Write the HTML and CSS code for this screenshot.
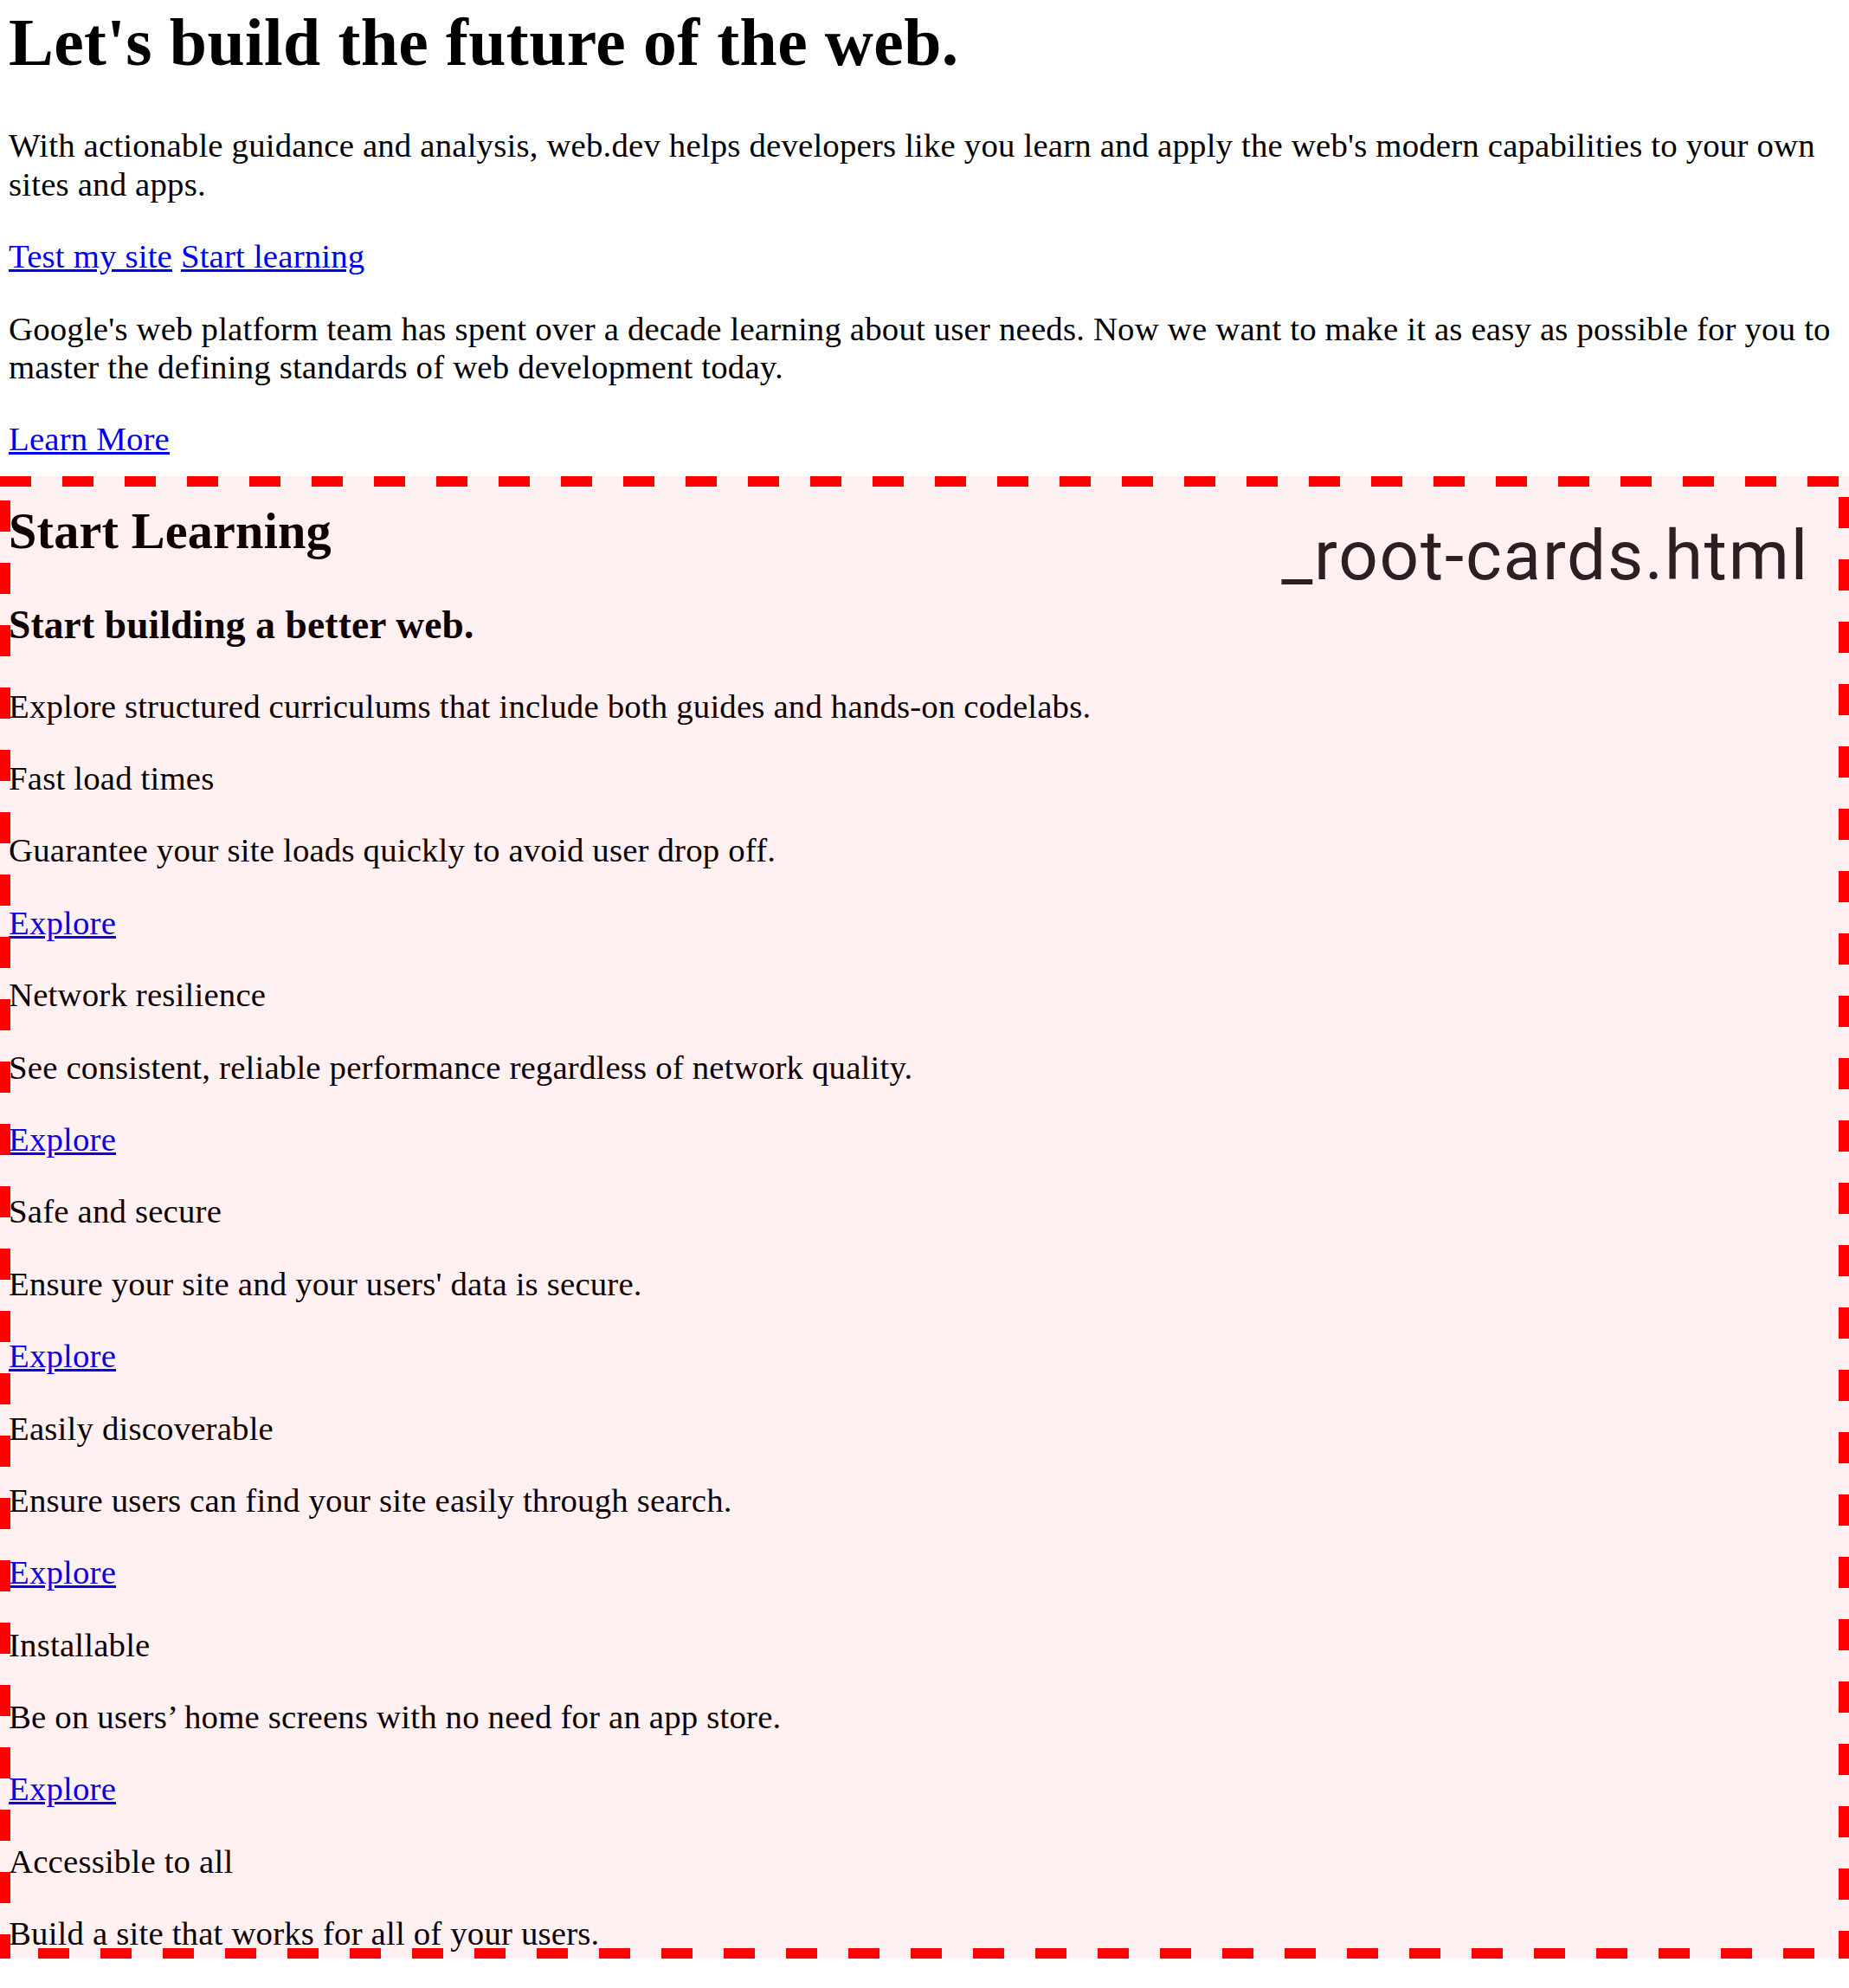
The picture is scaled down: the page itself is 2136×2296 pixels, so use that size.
FILE: index.html
```html
<!DOCTYPE html>
<html>
<head>
<meta charset="utf-8">
<title>web.dev</title>
<link rel="stylesheet" href="styles.css">
</head>
<body>
<div class="page">
  <h1 class="title">Let's build the future of the web.</h1>
  <p>With actionable guidance and analysis, web.dev helps developers like you learn and apply the web's modern capabilities to your own sites and apps.</p>
  <p><a href="#">Test my site</a> <a href="#">Start learning</a></p>
  <p>Google's web platform team has spent over a decade learning about user needs. Now we want to make it as easy as possible for you to master the defining standards of web development today.</p>
  <p><a href="#">Learn More</a></p>

  <section class="region">
    <h2 class="region-title">Start Learning</h2>
    <h3 class="region-sub">Start building a better web.</h3>
    <p>Explore structured curriculums that include both guides and hands-on codelabs.</p>
    <p>Fast load times</p>
    <p>Guarantee your site loads quickly to avoid user drop off.</p>
    <p><a href="#">Explore</a></p>
    <p>Network resilience</p>
    <p>See consistent, reliable performance regardless of network quality.</p>
    <p><a href="#">Explore</a></p>
    <p>Safe and secure</p>
    <p>Ensure your site and your users' data is secure.</p>
    <p><a href="#">Explore</a></p>
    <p>Easily discoverable</p>
    <p>Ensure users can find your site easily through search.</p>
    <p><a href="#">Explore</a></p>
    <p>Installable</p>
    <p>Be on users’ home screens with no need for an app store.</p>
    <p><a href="#">Explore</a></p>
    <p>Accessible to all</p>
    <p>Build a site that works for all of your users.</p>
    <div class="region-label">_root-cards.html</div>
  </section>
</div>
</body>
</html>
```

FILE: styles.css
```css
html, body {
  margin: 0;
  background: #ffffff;
}

body {
  font-family: "Liberation Serif", "Times New Roman", serif;
  font-size: 38.85px;
  line-height: 1.147;
  letter-spacing: 0.16px;
  color: #000000;
}

.page {
  padding: 5px 10px 0;
}

a {
  color: #0000ee;
}

p {
  margin: 1em 0;
}

.title {
  font-size: 2em;
  letter-spacing: 0.4px;
  margin: 0 0 0.67em;
}

.region {
  position: relative;
  margin: -19px -10px 0;
  padding: 31px 10px 0;
  height: 1681px;
  overflow: hidden;
}

.region::after {
  content: "";
  position: absolute;
  inset: 0;
  pointer-events: none;
  background:
    repeating-linear-gradient(to right, #ff0000 0 36px, transparent 36px 72px) left 0 top 0 / 100% 12px no-repeat,
    repeating-linear-gradient(to bottom, #ff0000 0 36px, transparent 36px 72px) left 0 top 28px / 12px calc(100% - 28px) no-repeat,
    repeating-linear-gradient(to bottom, #ff0000 0 36px, transparent 36px 72px) right 0 top 24px / 12px calc(100% - 24px) no-repeat,
    repeating-linear-gradient(to right, #ff0000 0 36px, transparent 36px 72px) left 44px bottom 0 / calc(100% - 44px) 12px no-repeat,
    rgba(255, 0, 0, 0.055);
}

.region-title {
  font-size: 1.5em;
  margin: 0 0 0.83em;
}

.region-sub {
  font-size: 1.17em;
  margin: 1em 0;
}

.region-label {
  position: absolute;
  top: 52px;
  right: 46px;
  font-family: "Google Sans", Roboto, "Open Sans", sans-serif;
  font-size: 80px;
  line-height: 1;
  letter-spacing: 1.8px;
  color: #202124;
}
```
